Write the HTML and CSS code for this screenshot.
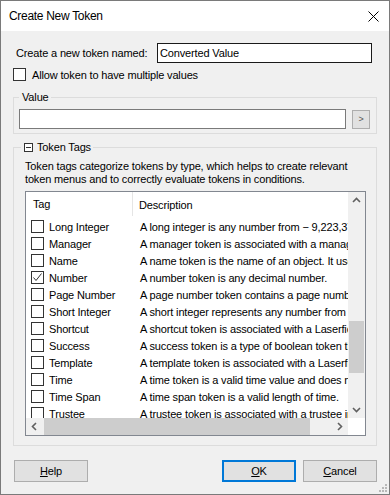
FILE: index.html
```html
<!DOCTYPE html>
<html>
<head>
<meta charset="utf-8">
<link rel="stylesheet" href="styles.css">
</head>
<body>
<div class="window">
  <div class="titlebar">
    <span class="title">Create New Token</span>
    <svg class="close" width="11" height="11" viewBox="0 0 11 11"><path d="M0.5 0.5 L10.5 10.5 M10.5 0.5 L0.5 10.5" stroke="#000" stroke-width="1" fill="none"/></svg>
  </div>
  <div class="content">
    <div class="row-name">
      <span class="label">Create a new token named:</span>
      <div class="textbox focused">Converted Value</div>
    </div>
    <div class="row-multi">
      <span class="chk"></span>
      <span class="label">Allow token to have multiple values</span>
    </div>
    <fieldset class="group group-value">
      <legend class="legend">Value</legend>
      <div class="value-row">
        <div class="textbox plain"></div>
        <div class="small-btn">&gt;</div>
      </div>
    </fieldset>
    <fieldset class="group group-tags">
      <legend class="legend legend-tags"><span class="minus"></span>Token Tags</legend>
      <p class="desc">Token tags categorize tokens by type, which helps to create relevant token menus and to correctly evaluate tokens in conditions.</p>
      <div class="listbox">
        <div class="list-view">
          <div class="list-head">
            <div class="col-tag">Tag</div>
            <div class="col-desc">Description</div>
          </div>
          <div class="list-row"><div class="col-tag"><span class="chk"></span>Long Integer</div><div class="col-desc">A long integer is any number from &#8722; 9,223,372,036,854,775,808 to 9,223,372,036,854,775,807.</div></div>
          <div class="list-row"><div class="col-tag"><span class="chk"></span>Manager</div><div class="col-desc">A manager token is associated with a manager of an object.</div></div>
          <div class="list-row"><div class="col-tag"><span class="chk"></span>Name</div><div class="col-desc">A name token is the name of an object. It uses no path.</div></div>
          <div class="list-row"><div class="col-tag"><span class="chk checked"><svg width="11" height="11" viewBox="0 0 11 11"><path d="M1.5 5.5 L4 8.5 L9.5 1.5" stroke="#333" stroke-width="1" fill="none"/></svg></span>Number</div><div class="col-desc">A number token is any decimal number.</div></div>
          <div class="list-row"><div class="col-tag"><span class="chk"></span>Page Number</div><div class="col-desc">A page number token contains a page number of a document.</div></div>
          <div class="list-row"><div class="col-tag"><span class="chk"></span>Short Integer</div><div class="col-desc">A short integer represents any number from &#8722;32,768 to 32,767.</div></div>
          <div class="list-row"><div class="col-tag"><span class="chk"></span>Shortcut</div><div class="col-desc">A shortcut token is associated with a Laserfiche shortcut.</div></div>
          <div class="list-row"><div class="col-tag"><span class="chk"></span>Success</div><div class="col-desc">A success token is a type of boolean token that indicates success.</div></div>
          <div class="list-row"><div class="col-tag"><span class="chk"></span>Template</div><div class="col-desc">A template token is associated with a Laserfiche template.</div></div>
          <div class="list-row"><div class="col-tag"><span class="chk"></span>Time</div><div class="col-desc">A time token is a valid time value and does not include a date.</div></div>
          <div class="list-row"><div class="col-tag"><span class="chk"></span>Time Span</div><div class="col-desc">A time span token is a valid length of time.</div></div>
          <div class="list-row"><div class="col-tag"><span class="chk"></span>Trustee</div><div class="col-desc">A trustee token is associated with a trustee in the repository.</div></div>
        </div>
        <div class="vscroll">
          <svg class="arrow" width="17" height="17" viewBox="0 0 17 17"><path d="M5 10 L8.5 6.5 L12 10" stroke="#606060" stroke-width="1.6" fill="none"/></svg>
          <div class="vtrack"><div class="vthumb"></div></div>
          <svg class="arrow" width="17" height="17" viewBox="0 0 17 17"><path d="M5 7 L8.5 10.5 L12 7" stroke="#606060" stroke-width="1.6" fill="none"/></svg>
        </div>
        <div class="hscroll">
          <svg class="arrow" width="17" height="17" viewBox="0 0 17 17"><path d="M10 5 L6.5 8.5 L10 12" stroke="#606060" stroke-width="1.6" fill="none"/></svg>
          <div class="htrack"><div class="hthumb"></div></div>
          <svg class="arrow" width="17" height="17" viewBox="0 0 17 17"><path d="M7 5 L10.5 8.5 L7 12" stroke="#606060" stroke-width="1.6" fill="none"/></svg>
        </div>
        <div class="corner"></div>
      </div>
    </fieldset>
    <div class="buttons">
      <div class="btn"><u>H</u>elp</div>
      <div class="spacer"></div>
      <div class="btn default"><u>O</u>K</div>
      <div class="btn"><u>C</u>ancel</div>
    </div>
  </div>
  <svg class="grip" width="9" height="9" viewBox="0 0 9 9">
    <rect x="6" y="0" width="2" height="2" fill="#b8b8b8"/>
    <rect x="3" y="3" width="2" height="2" fill="#b8b8b8"/>
    <rect x="6" y="3" width="2" height="2" fill="#b8b8b8"/>
    <rect x="0" y="6" width="2" height="2" fill="#b8b8b8"/>
    <rect x="3" y="6" width="2" height="2" fill="#b8b8b8"/>
    <rect x="6" y="6" width="2" height="2" fill="#b8b8b8"/>
  </svg>
</div>
</body>
</html>
```
FILE: styles.css
```css
* { box-sizing: border-box; }
html, body { margin: 0; padding: 0; background: #f0f0f0; }
body {
  font-family: "Liberation Sans", Arial, sans-serif;
  font-size: 11px;
  letter-spacing: -0.15px;
  color: #000;
}
.window {
  position: relative;
  width: 390px;
  height: 495px;
  border: 1px solid #7a7a7a;
  display: flex;
  flex-direction: column;
  background: #f0f0f0;
}
.titlebar {
  height: 30px;
  background: #fff;
  display: flex;
  align-items: center;
  padding-left: 8px;
  padding-right: 10px;
  flex: none;
}
.title { font-size: 12px; letter-spacing: -0.3px; flex: 1; }
.close { display: block; }
.content {
  flex: 1;
  padding: 0 12px 0 12px;
  display: flex;
  flex-direction: column;
}
.row-name {
  margin-top: 12px;
  height: 20px;
  display: flex;
  align-items: center;
}
.row-name .label { margin-left: 3px; }
.textbox {
  height: 20px;
  background: #fff;
  border: 1px solid #7a7a7a;
  padding-left: 2px;
  line-height: 18px;
}
.textbox.focused {
  border-color: #1a1a1a;
  width: 215px;
  margin-left: auto;
  margin-right: 5px;
}
.row-multi {
  margin-top: 5px;
  height: 13px;
  display: flex;
  align-items: center;
}
.row-multi .label { margin-left: 6px; }
.chk {
  width: 13px;
  height: 13px;
  border: 1px solid #333;
  background: #fff;
  flex: none;
  display: inline-flex;
  align-items: center;
  justify-content: center;
}
.chk svg { display: block; }
.group {
  margin: 0;
  border: 1px solid #dcdcdc;
  min-width: 0;
}
.legend {
  height: 14px;
  line-height: 14px;
  padding: 0 2px 0 3px;
  font-size: 11px;
}
.group-value {
  margin-top: 9px;
  padding: 5px 6px 4px 5px;
}
.value-row {
  display: flex;
  align-items: center;
}
.value-row .plain { flex: 1; }
.small-btn {
  width: 18px;
  height: 19px;
  margin-left: 6px;
  background: #e1e1e1;
  border: 1px solid #adadad;
  color: #555;
  font-size: 9px;
  display: flex;
  align-items: center;
  justify-content: center;
}
.group-tags {
  margin-top: 6px;
  padding: 0 10px 9px 11px;
}
.legend-tags {
  margin-left: -4px;
  display: flex;
  align-items: center;
}
.minus {
  width: 9px;
  height: 9px;
  border: 1px solid #333;
  margin-right: 4px;
  background: linear-gradient(#333, #333) center / 5px 1px no-repeat #fff;
}
.desc {
  margin: 6px 0 5px 0;
  line-height: 13px;
}
.listbox {
  height: 245px;
  border: 1px solid #828790;
  background: #fff;
  display: grid;
  grid-template-columns: 1fr 17px;
  grid-template-rows: 1fr 17px;
}
.list-view {
  overflow: hidden;
  min-width: 0;
}
.list-head {
  height: 26px;
  display: flex;
  align-items: center;
}
.list-head .col-tag {
  padding-left: 7px;
  display: flex;
  align-items: center;
  border-right: 1px solid #e5e5e5;
  height: 24px;
  margin-bottom: 2px;
}
.list-head .col-desc { padding-left: 6px; }
.col-tag {
  width: 107px;
  flex: none;
}
.col-desc {
  white-space: nowrap;
  padding-left: 7px;
}
.list-row {
  height: 17px;
  display: flex;
  align-items: center;
}
.list-row .col-tag {
  display: flex;
  align-items: center;
  padding-left: 5px;
}
.list-row .chk { margin-right: 5px; }
.vscroll {
  background: #f0f0f0;
  display: flex;
  flex-direction: column;
}
.vtrack { flex: 1; padding-top: 112px; }
.vthumb { height: 52px; margin: 0 1px; background: #cdcdcd; }
.hscroll {
  background: #f0f0f0;
  display: flex;
}
.htrack { flex: 1; padding-left: 1px; }
.hthumb { width: 266px; height: 100%; background: #cdcdcd; }
.arrow { display: block; flex: none; }
.corner { background: #fff; }
.buttons {
  margin-top: 14px;
  display: flex;
  gap: 7px;
}
.spacer { flex: 1; }
.btn {
  width: 74px;
  height: 22px;
  background: #e1e1e1;
  border: 1px solid #adadad;
  display: flex;
  align-items: center;
  justify-content: center;
  font-size: 11px;
}
.buttons .btn:first-child { margin-left: 1px; }
.btn.default { border: 2px solid #0078d7; }
.grip { position: absolute; right: 1px; bottom: 1px; }
```
